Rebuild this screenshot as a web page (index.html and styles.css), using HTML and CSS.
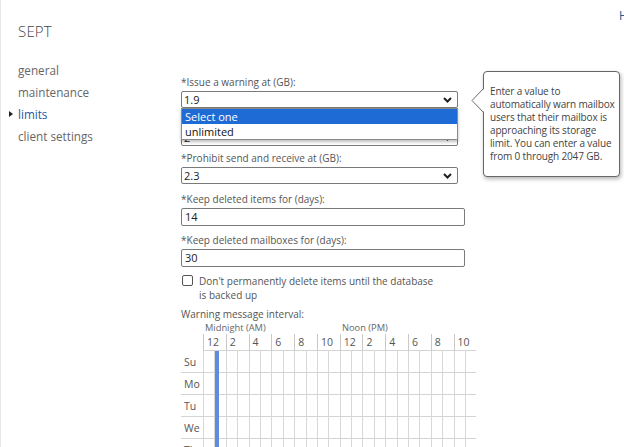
FILE: index.html
```html
<!DOCTYPE html>
<html>
<head>
<meta charset="utf-8">
<link rel="stylesheet" href="styles.css">
</head>
<body>
<div class="page">
  <a class="help" href="#">Help</a>
  <aside class="sidebar">
    <div class="title">SEPT</div>
    <ul class="nav">
      <li class="nav-item"><span class="marker"></span>general</li>
      <li class="nav-item"><span class="marker"></span>maintenance</li>
      <li class="nav-item active"><span class="marker"></span>limits</li>
      <li class="nav-item"><span class="marker"></span>client settings</li>
    </ul>
  </aside>
  <main class="form">
    <div class="field field-select">
      <div class="label">*Issue a warning at (GB):</div>
      <div class="select"><span>1.9</span><svg class="chev" width="9" height="6" viewBox="0 0 9 6"><polyline points="1,1 4.5,4.5 8,1" fill="none" stroke="#222" stroke-width="2"/></svg></div>
      <div class="dropdown">
        <div class="option selected">Select one</div>
        <div class="option">unlimited</div>
      </div>
    </div>
    <div class="field field-select">
      <div class="label">*Prohibit send at (GB):</div>
      <div class="select"><span>2</span><svg class="chev" width="9" height="6" viewBox="0 0 9 6"><polyline points="1,1 4.5,4.5 8,1" fill="none" stroke="#222" stroke-width="2"/></svg></div>
    </div>
    <div class="field field-select last-select">
      <div class="label">*Prohibit send and receive at (GB):</div>
      <div class="select"><span>2.3</span><svg class="chev" width="9" height="6" viewBox="0 0 9 6"><polyline points="1,1 4.5,4.5 8,1" fill="none" stroke="#222" stroke-width="2"/></svg></div>
    </div>
    <div class="field field-input">
      <div class="label">*Keep deleted items for (days):</div>
      <div class="input">14</div>
    </div>
    <div class="field field-input">
      <div class="label">*Keep deleted mailboxes for (days):</div>
      <div class="input">30</div>
    </div>
    <div class="check-row">
      <span class="checkbox"></span>
      <span class="check-text">Don't permanently delete items until the database<br>is backed up</span>
    </div>
    <div class="label interval-label">Warning message interval:</div>
    <div class="periods">
      <span class="period">Midnight (AM)</span>
      <span class="period">Noon (PM)</span>
    </div>
    <div class="schedule" id="schedule">
      <div class="corner"></div>
      <div class="hour">12</div><div class="hour">2</div><div class="hour">4</div><div class="hour">6</div><div class="hour">8</div><div class="hour">10</div>
      <div class="hour">12</div><div class="hour">2</div><div class="hour">4</div><div class="hour">6</div><div class="hour">8</div><div class="hour">10</div>
      <div class="marker-line"></div>
    </div>
  </main>
  <div class="tooltip">
    <svg class="tip-arrow" width="14" height="26" viewBox="0 0 14 26"><polygon points="14,0 1,12.5 14,25" fill="#fff"/><polyline points="13,0 1,12.5 13,25" fill="none" stroke="#6a6a6a" stroke-width="1"/></svg>
    Enter a value to<br>automatically warn mailbox<br>users that their mailbox is<br>approaching its storage<br>limit. You can enter a value<br>from 0 through 2047 GB.
  </div>
</div>
<script>
  var days = ["Su","Mo","Tu","We","Th"];
  var s = document.getElementById("schedule");
  var line = s.querySelector(".marker-line");
  days.forEach(function(d){
    var l = document.createElement("div");
    l.className = "day";
    l.textContent = d;
    s.insertBefore(l, line);
    for (var i = 0; i < 24; i++) {
      var c = document.createElement("div");
      c.className = "cell";
      s.insertBefore(c, line);
    }
  });
</script>
</body>
</html>
```

FILE: styles.css
```css
* { box-sizing: border-box; }
html, body { margin: 0; padding: 0; }
body {
  width: 624px;
  height: 447px;
  overflow: hidden;
  background: #fff;
  font-family: "Open Sans", "Noto Sans", sans-serif;
  color: #444;
}
.page {
  position: relative;
  display: flex;
  width: 624px;
  height: 447px;
  border-left: 1px solid #e6e6e6;
}
.help {
  position: absolute;
  left: 618px;
  top: 7px;
  font-size: 12px;
  color: #1e5aa0;
  text-decoration: none;
}
.sidebar {
  width: 180px;
  flex: none;
  padding-top: 20px;
  padding-left: 8px;
}
.title {
  padding-left: 9px;
  font-size: 15px;
  line-height: 22px;
  font-weight: 300;
  color: #444;
  letter-spacing: 0.2px;
}
.nav {
  list-style: none;
  margin: 17px 0 0;
  padding: 0;
}
.nav-item {
  display: flex;
  align-items: center;
  height: 22px;
  font-size: 11.7px;
  color: #666;
}
.marker {
  width: 9px;
  flex: none;
}
.nav-item.active { color: #1e5aa0; }
.nav-item.active .marker::before {
  content: "";
  display: block;
  width: 0;
  height: 0;
  border-left: 4px solid #222;
  border-top: 3.5px solid transparent;
  border-bottom: 3.5px solid transparent;
}
.form {
  flex: none;
  width: 300px;
  padding-top: 75px;
  font-size: 10px;
}
.label {
  line-height: 14px;
  height: 14px;
  color: #555;
  white-space: nowrap;
}
.field { position: relative; }
.field .label { margin-bottom: 2px; }
.field-select { margin-bottom: 5px; }
.last-select { margin-bottom: 8px; }
.field-input { margin-bottom: 7px; }
.select {
  width: 277px;
  height: 17px;
  border: 1px solid #7a7a7a;
  border-radius: 2px;
  display: flex;
  align-items: center;
  justify-content: space-between;
  padding: 0 5px 0 2px;
  font-size: 11px;
  color: #222;
}
.chev { display: block; }
.input {
  width: 284px;
  height: 18px;
  border: 1px solid #7a7a7a;
  border-radius: 2px;
  padding-left: 3px;
  font-size: 11px;
  line-height: 16px;
  color: #222;
}
.dropdown {
  position: absolute;
  left: 0;
  top: 33px;
  width: 277px;
  border: 1px solid #8a8a8a;
  background: #fff;
  box-shadow: 0 2px 3px rgba(0,0,0,0.25);
  font-size: 11px;
  color: #111;
  z-index: 2;
}
.option {
  height: 15px;
  line-height: 15px;
  padding-left: 3px;
}
.option.selected {
  background: #1f6bd6;
  color: #fff;
}
.check-row {
  display: flex;
  align-items: flex-start;
  margin-bottom: 5px;
  color: #555;
}
.checkbox {
  width: 11px;
  height: 11px;
  border: 1px solid #555;
  border-radius: 2px;
  margin: 1px 6px 0 1px;
  flex: none;
}
.check-text {
  line-height: 14px;
  font-size: 10px;
}
.periods {
  display: flex;
  height: 13px;
  padding-left: 24px;
  padding-top: 1px;
}
.period {
  width: 137px;
  line-height: 11px;
  font-size: 9.3px;
  color: #666;
  white-space: nowrap;
}
.schedule {
  position: relative;
  display: grid;
  grid-template-columns: 22px repeat(24, 11.4px);
}
.corner { height: 17px; }
.hour {
  grid-column: span 2;
  height: 17px;
  border-left: 1px solid #c8c8c8;
  border-bottom: 1px solid #d4d4d4;
  padding-left: 3px;
  font-size: 10.5px;
  line-height: 16px;
  color: #555;
}
.day {
  grid-column: 1;
  height: 22px;
  border-bottom: 1px solid #d4d4d4;
  padding-left: 3px;
  line-height: 22px;
  font-size: 10.5px;
  color: #555;
}
.cell {
  height: 22px;
  border-left: 1px solid #d8d8d8;
  border-bottom: 1px solid #d4d4d4;
}
.marker-line {
  position: absolute;
  left: 34px;
  top: 17px;
  bottom: 0;
  width: 4px;
  background: #5f8ae0;
}
.tooltip {
  position: absolute;
  left: 482px;
  top: 71px;
  width: 137px;
  height: 106px;
  padding: 13px 2px 0 6px;
  background: #fff;
  border: 1px solid #666;
  border-radius: 4px;
  box-shadow: 1px 2px 4px rgba(0,0,0,0.3);
  font-size: 10px;
  line-height: 13px;
  letter-spacing: -0.15px;
  white-space: nowrap;
  color: #444;
  z-index: 3;
}
.tip-arrow {
  position: absolute;
  left: -13px;
  top: 16px;
}
```
